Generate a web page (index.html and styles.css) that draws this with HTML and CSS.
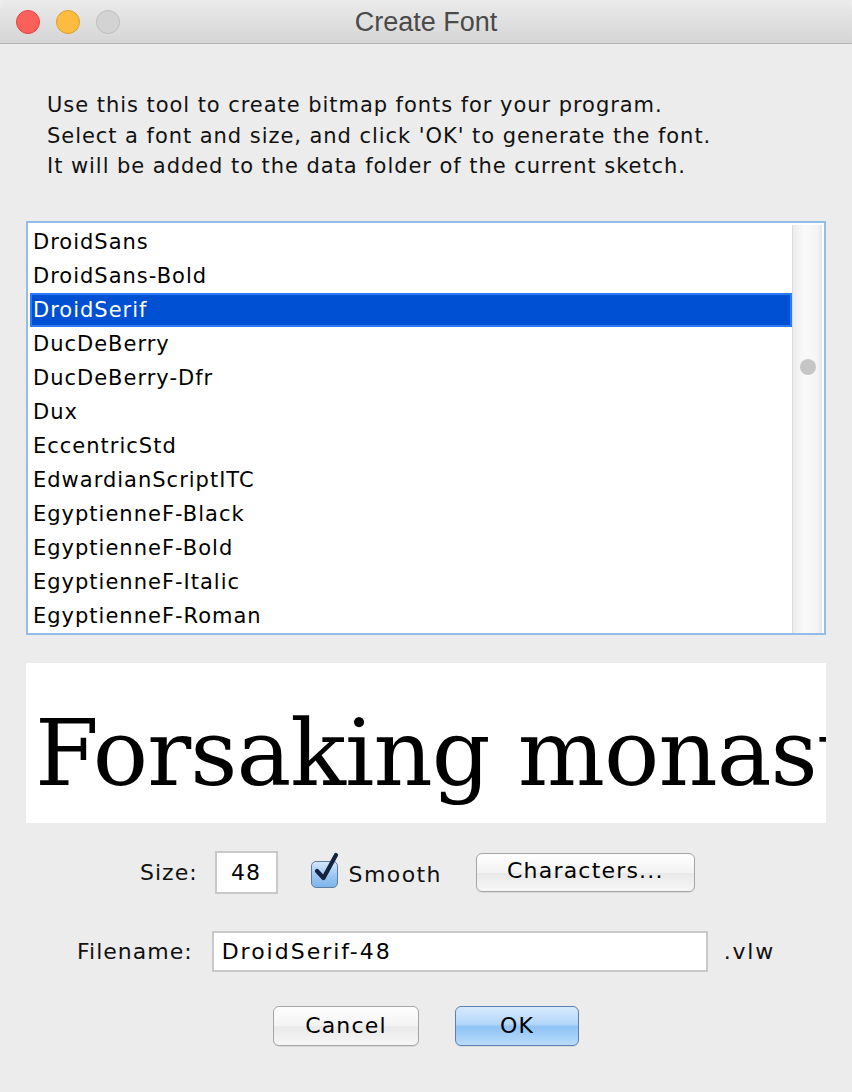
FILE: index.html
```html
<!DOCTYPE html>
<html>
<head>
<meta charset="utf-8">
<title>Create Font</title>
<link rel="stylesheet" href="styles.css">
</head>
<body>
<div class="window">
  <div class="titlebar">
    <div class="lights">
      <span class="light red"></span>
      <span class="light yellow"></span>
      <span class="light gray"></span>
    </div>
    <div class="title">Create Font</div>
    <div></div>
  </div>
  <div class="content">
    <p class="intro">Use this tool to create bitmap fonts for your program.<br>Select a font and size, and click 'OK' to generate the font.<br>It will be added to the data folder of the current sketch.</p>
    <div class="list">
      <div class="rows">
        <div class="row">DroidSans</div>
        <div class="row">DroidSans-Bold</div>
        <div class="row selected">DroidSerif</div>
        <div class="row">DucDeBerry</div>
        <div class="row">DucDeBerry-Dfr</div>
        <div class="row">Dux</div>
        <div class="row">EccentricStd</div>
        <div class="row">EdwardianScriptITC</div>
        <div class="row">EgyptienneF-Black</div>
        <div class="row">EgyptienneF-Bold</div>
        <div class="row">EgyptienneF-Italic</div>
        <div class="row">EgyptienneF-Roman</div>
      </div>
      <div class="scrollbar"><span class="thumb"></span></div>
    </div>
    <div class="preview"><span class="sample">Forsaking monastic</span></div>
    <div class="size-row">
      <span class="label">Size:</span>
      <span class="field size-field">48</span>
      <span class="check">
        <span class="box"><svg viewBox="0 0 30 34" width="30" height="34"><path d="M6 19 L12.5 26 L25 3" fill="none" stroke="#14233f" stroke-width="4.2" stroke-linecap="round" stroke-linejoin="round"/></svg></span>
        <span class="label">Smooth</span>
      </span>
      <span class="button chars">Characters...</span>
    </div>
    <div class="file-row">
      <span class="label">Filename:</span>
      <span class="field name-field">DroidSerif-48</span>
      <span class="label ext">.vlw</span>
    </div>
    <div class="buttons">
      <span class="button cancel">Cancel</span>
      <span class="button ok">OK</span>
    </div>
  </div>
</div>
</body>
</html>
```

FILE: styles.css
```css
html, body {
  margin: 0;
  padding: 0;
  background: #ececec;
}
body {
  width: 852px;
  height: 1092px;
  overflow: hidden;
  font-family: "DejaVu Sans", "Noto Sans", sans-serif;
  color: #000;
}
.window {
  width: 852px;
  height: 1092px;
  background: #ececec;
  border-radius: 10px 10px 0 0;
  overflow: hidden;
}
.titlebar {
  height: 43px;
  border-bottom: 1px solid #b4b4b4;
  background: linear-gradient(#ebebeb, #d5d5d5);
  display: grid;
  grid-template-columns: 1fr auto 1fr;
  align-items: center;
}
.lights {
  display: flex;
  gap: 16px;
  padding-left: 16px;
}
.light {
  width: 22px;
  height: 22px;
  border-radius: 50%;
  border: 1px solid;
}
.light.red { background: #fc605b; border-color: #de4541; }
.light.yellow { background: #fdbc40; border-color: #dd9f2a; }
.light.gray { background: #d3d3d3; border-color: #bdbdbd; }
.title {
  font-family: "Liberation Sans", Arial, sans-serif;
  font-size: 27px;
  color: #4a4a4a;
  padding-top: 1px;
}
.content {
  display: flex;
  flex-direction: column;
}
.intro {
  margin: 46px 0 0 47px;
  font-size: 21px;
  letter-spacing: 0.95px;
  line-height: 30.5px;
  color: #111;
}
.list {
  margin: 39px 0 0 26px;
  width: 796px;
  height: 410px;
  border: 2px solid #93bde9;
  background: #fff;
  display: flex;
}
.rows {
  flex: 1;
  padding: 2px 0 0 2px;
}
.row {
  height: 34px;
  line-height: 34px;
  font-size: 21px;
  letter-spacing: 1px;
  padding-left: 3px;
  white-space: nowrap;
}
.row.selected {
  background: #0050d4;
  color: #fff;
  box-shadow: inset 0 0 0 2px #2a7cff;
}
.scrollbar {
  width: 29px;
  margin: 2px 2px 0 0;
  height: 408px;
  border-left: 1px solid #dcdcdc;
  background: linear-gradient(90deg, #ececec, #fafafa 40%, #f4f4f4 85%, #e6e6e6);
  display: flex;
  justify-content: center;
}
.thumb {
  width: 16px;
  height: 16px;
  border-radius: 50%;
  background: #c6c6c6;
  margin-top: 134px;
}
.preview {
  margin: 28px 0 0 26px;
  width: 800px;
  height: 160px;
  background: #fff;
  overflow: hidden;
  white-space: nowrap;
  display: flex;
  align-items: center;
}
.sample {
  font-family: "DejaVu Serif", serif;
  font-size: 92px;
  letter-spacing: -1px;
  padding-left: 9px;
  padding-top: 22px;
}
.label {
  font-size: 22px;
  letter-spacing: 1px;
  color: #111;
}
.size-row {
  margin-top: 28px;
  height: 43px;
  display: flex;
  align-items: center;
  padding-left: 140px;
}
.field {
  background: #fff;
  border: 2px solid #c9c9c9;
  box-sizing: border-box;
  font-size: 22px;
  letter-spacing: 1px;
  display: flex;
  align-items: center;
}
.size-field {
  width: 63px;
  height: 43px;
  margin-left: 17px;
  justify-content: center;
}
.check {
  display: flex;
  align-items: center;
  margin-left: 33px;
}
.box {
  width: 25px;
  height: 25px;
  border: 1px solid #5b7ea8;
  border-radius: 5px;
  background: linear-gradient(#d4e7fa, #9cc6f0 55%, #7fb4ea);
  position: relative;
  margin-top: 4px;
}
.box svg {
  position: absolute;
  left: -1px;
  top: -10px;
}
.check .label {
  margin-left: 11px;
  padding-top: 4px;
  letter-spacing: 1.4px;
}
.button {
  box-sizing: border-box;
  border: 1px solid #a5a5a5;
  border-radius: 6px;
  background: linear-gradient(#ffffff, #f3f3f3 50%, #e9e9e9 52%, #f6f6f6);
  font-size: 22px;
  letter-spacing: 1.2px;
  display: flex;
  align-items: center;
  justify-content: center;
  box-shadow: 0 1px 0 rgba(0,0,0,0.08);
}
.chars {
  width: 219px;
  height: 39px;
  margin-left: 34px;
  padding-bottom: 3px;
}
.file-row {
  margin-top: 37px;
  height: 41px;
  display: flex;
  align-items: center;
  padding-left: 77px;
}
.name-field {
  width: 496px;
  height: 41px;
  margin-left: 19px;
  padding-left: 8px;
  letter-spacing: 2px;
}
.ext {
  margin-left: 16px;
  letter-spacing: 1.8px;
}
.buttons {
  margin-top: 34px;
  display: flex;
  justify-content: center;
  gap: 36px;
}
.cancel {
  width: 146px;
  height: 40px;
}
.ok {
  width: 124px;
  height: 40px;
  border-color: #5e7fb1;
  background: linear-gradient(#d8eafc, #b3d6fa 45%, #8fc3f6 52%, #b9dcfb);
}
```
